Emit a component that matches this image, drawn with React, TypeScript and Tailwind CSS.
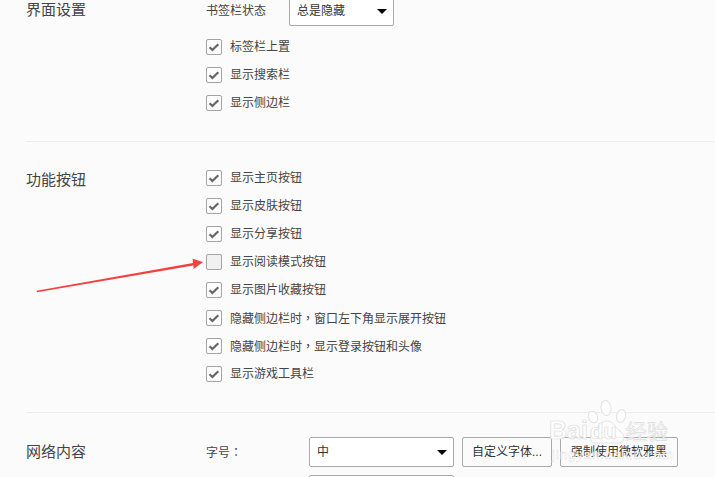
const font = { fontFamily: '"Liberation Sans", "Noto Sans CJK SC", sans-serif' };
const tc = { fontFamily: '"Noto Sans CJK TC", sans-serif' };

function Check({ label, checked = true }: { label: React.ReactNode; checked?: boolean }) {
  return (
    <div className="flex h-7 items-center gap-2">
      <span className={`flex h-4 w-4 items-center justify-center rounded-[2px] border border-[#a3a3a3] ${checked ? 'bg-[#fdfdfd]' : 'bg-[#f1f1f1]'}`}>
        {checked && (
          <svg width="12" height="10" viewBox="0 0 12 10" fill="none">
            <path d="M1.5 5.2 L4.4 8 L10.3 2.2" stroke="#666666" strokeWidth="2.2" />
          </svg>
        )}
      </span>
      <span className="text-xs text-[#444]">{label}</span>
    </div>
  );
}

function Select({ label, className }: { label: string; className: string }) {
  return (
    <div className={`flex items-center justify-between rounded-[2px] border border-[#a9a9a9] bg-white pl-[7px] pr-[6px] text-xs text-[#333] ${className}`}>
      <span>{label}</span>
      <span className="h-0 w-0 border-x-[5px] border-t-[5px] border-x-transparent border-t-black" />
    </div>
  );
}

function Btn({ label, className }: { label: string; className: string }) {
  return (
    <div className={`flex h-[30px] items-center justify-center rounded-[2px] border border-[#a9a9a9] bg-[#fbfbfb] text-xs text-[#333] ${className}`}>
      {label}
    </div>
  );
}

export default function App() {
  return (
    <div className="relative h-[477px] w-[715px] overflow-hidden bg-[#fbfbfb]" style={font}>
      <div className="pl-[26px]">
        <section className="box-content flex h-[141px] border-b border-[#ececec]">
          <h2 className="w-[180px] text-[15px] leading-5 text-[#444]">界面设置</h2>
          <div>
            <div className="-mt-1 mb-[7px] flex items-center">
              <span className="w-[83px] text-xs text-[#444]">书签栏状态</span>
              <Select label="总是隐藏" className="h-[30px] w-[105px]" />
            </div>
            <Check label="标签栏上置" />
            <Check label="显示搜索栏" />
            <Check label="显示侧边栏" />
          </div>
        </section>
        <section className="box-content flex h-[248px] border-b border-[#ececec] pt-[22px]">
          <h2 className="w-[180px] pt-[6px] text-[15px] leading-5 text-[#444]">功能按钮</h2>
          <div>
            <Check label="显示主页按钮" />
            <Check label="显示皮肤按钮" />
            <Check label="显示分享按钮" />
            <Check label="显示阅读模式按钮" checked={false} />
            <Check label="显示图片收藏按钮" />
            <Check label={<>隐藏侧边栏时<span style={tc}>，</span>窗口左下角显示展开按钮</>} />
            <Check label={<>隐藏侧边栏时<span style={tc}>，</span>显示登录按钮和头像</>} />
            <Check label="显示游戏工具栏" />
          </div>
        </section>
        <section className="flex pt-6">
          <h2 className="w-[180px] pt-[5px] text-[15px] leading-5 text-[#444]">网络内容</h2>
          <div>
            <div className="flex items-center">
              <span className="w-[103px] text-xs text-[#444]">字号<span style={tc}>：</span></span>
              <Select label="中" className="h-[30px] w-[145px]" />
              <Btn label="自定义字体..." className="ml-2 w-[90px]" />
              <Btn label="强制使用微软雅黑" className="ml-2 w-[118px]" />
            </div>
            <div className="ml-[103px] mt-[8px] h-[30px] w-[145px] rounded-[2px] border border-[#a9a9a9] bg-white" />
          </div>
        </section>
      </div>

      <svg className="absolute left-0 top-0" width="715" height="477" viewBox="0 0 715 477" fill="none">
        <path d="M36.5 290.8 L193 263 L192.6 258.8 L203 262 L193.6 269 L193.4 265.6 L37 292.2 Z" fill="#f4403f" />
        <g fill="#ffffff" fillOpacity="0.8" stroke="#e2e2e2" strokeWidth="1">
          <ellipse cx="606" cy="408" rx="5" ry="7.5" transform="rotate(-8 606 408)" />
          <ellipse cx="621" cy="416" rx="4.5" ry="6.5" transform="rotate(15 621 416)" />
          <ellipse cx="593" cy="417" rx="4.5" ry="6" transform="rotate(-25 593 417)" />
          <path d="M607 421 C613 421 615 427 620 431 C627 437 624 444 616 443 L598 443 C590 444 588 437 594 431 C599 427 601 421 607 421 Z" />
        </g>
      </svg>
      <div className="absolute left-[549px] top-[418px] flex items-baseline font-bold leading-none text-white/80 [-webkit-text-stroke:0.7px_#dcdcdc]">
        <span className="text-[25px]">Bai</span>
        <span className="ml-[2px] text-[22px]">du</span>
        <span className="ml-[9px] text-[21px] font-normal">经验</span>
      </div>
      <div className="absolute left-[552px] top-[448px] text-[13px] leading-none tracking-[1px] text-white/70 [-webkit-text-stroke:0.3px_#e0e0e0]">jingyan.baidu.com</div>
    </div>
  );
}
